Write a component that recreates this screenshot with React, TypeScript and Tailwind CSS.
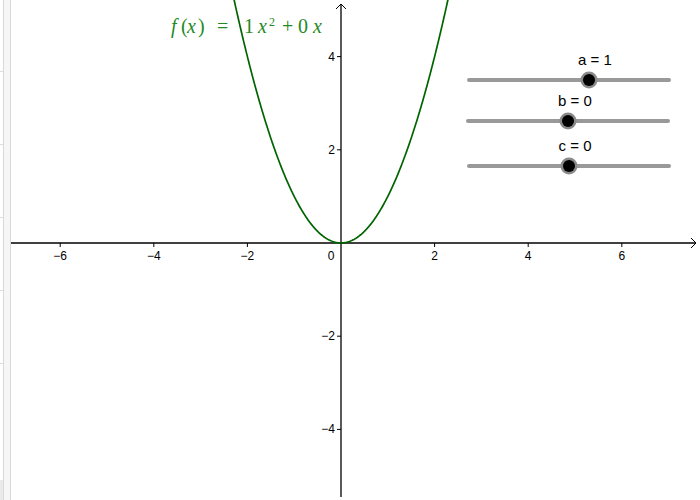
import React from "react";

const OX = 341;
const OY = 243;
const UX = 46.8;
const UY = 46.6;

const sx = (x: number) => OX + x * UX;
const sy = (y: number) => OY - y * UY;

function parabolaPath(a: number, b: number, c: number) {
  const pts: string[] = [];
  for (let i = 0; i <= 400; i++) {
    const x = -2.4 + (4.8 * i) / 400;
    const y = a * x * x + b * x + c;
    pts.push(`${i === 0 ? "M" : "L"}${sx(x).toFixed(2)},${sy(y).toFixed(2)}`);
  }
  return pts.join(" ");
}

const sliders = [
  { label: "a = 1", x1: 469, x2: 669, y: 80, knob: 589, lx: 595, ly: 65 },
  { label: "b = 0", x1: 468, x2: 668, y: 121, knob: 568, lx: 575, ly: 106 },
  { label: "c = 0", x1: 469, x2: 669, y: 166, knob: 569, lx: 575, ly: 151 },
];

const xTicks = [-6, -4, -2, 2, 4, 6];
const yTicks = [4, 2, -2, -4];
const sans = "'Liberation Sans', Arial, sans-serif";

function Graph() {
  return (
    <svg width={689} height={500} viewBox="0 0 689 500" className="block">
      <g transform="translate(-11,0)">
        {/* axes */}
        <line x1={11} y1={OY} x2={696} y2={OY} stroke="#000" strokeWidth={1.3} />
        <polyline points="691,238 696,243 691,248" fill="none" stroke="#000" strokeWidth={1} />
        <line x1={OX} y1={497} x2={OX} y2={4} stroke="#000" strokeWidth={1.3} />
        <polyline points="336,9 341,4 346,9" fill="none" stroke="#000" strokeWidth={1} />

        {xTicks.map((t) => (
          <g key={t}>
            <line x1={sx(t)} y1={OY} x2={sx(t)} y2={OY + 4} stroke="#000" strokeWidth={1} />
            <text x={sx(t)} y={OY + 17} textAnchor="middle" fontFamily={sans} fontSize={12} fill="#000">
              {t < 0 ? `\u2212${-t}` : t}
            </text>
          </g>
        ))}
        <text x={331} y={OY + 17} textAnchor="middle" fontFamily={sans} fontSize={12}>
          0
        </text>
        {yTicks.map((t) => (
          <g key={t}>
            <line x1={OX - 4} y1={sy(t)} x2={OX} y2={sy(t)} stroke="#000" strokeWidth={1} />
            <text x={OX - 6} y={sy(t) + 4} textAnchor="end" fontFamily={sans} fontSize={12}>
              {t < 0 ? `\u2212${-t}` : t}
            </text>
          </g>
        ))}

        {/* curve */}
        <path d={parabolaPath(1, 0, 0)} fill="none" stroke="#006400" strokeWidth={1.7} />

        {/* formula */}
        <text fontFamily="'Liberation Serif', 'Times New Roman', serif" fontSize={20} fill="#1f8a1f">
          <tspan x={171} y={33} fontStyle="italic">f</tspan>
          <tspan x={181} y={33}>(</tspan>
          <tspan x={187} y={33} fontStyle="italic">x</tspan>
          <tspan x={198} y={33}>)</tspan>
          <tspan x={217} y={33}>=</tspan>
          <tspan x={244} y={33}>1</tspan>
          <tspan x={258} y={33} fontStyle="italic">x</tspan>
          <tspan x={269} y={26} fontSize={12}>2</tspan>
          <tspan x={282} y={33}>+</tspan>
          <tspan x={298} y={33}>0</tspan>
          <tspan x={313} y={33} fontStyle="italic">x</tspan>
        </text>

        {/* sliders */}
        {sliders.map((s) => (
          <g key={s.label}>
            <text x={s.lx} y={s.ly} textAnchor="middle" fontFamily={sans} fontSize={15} fill="#000">
              {s.label}
            </text>
            <line x1={s.x1} y1={s.y} x2={s.x2} y2={s.y} stroke="#999" strokeWidth={4} strokeLinecap="round" />
            <circle cx={s.knob} cy={s.y} r={8.5} fill="#8a8a8a" />
            <circle cx={s.knob} cy={s.y} r={6} fill="#000" />
          </g>
        ))}
      </g>
    </svg>
  );
}

export default function App() {
  return (
    <div className="flex w-[700px] h-[500px] overflow-hidden bg-white">
      <div className="flex h-full">
        <div className="flex flex-col w-[3px] h-full">
          <div className="h-[72px] border-b border-[#dcdcdc]" />
          <div className="h-[73px] border-b border-[#dcdcdc]" />
          <div className="h-[73px] border-b border-[#dcdcdc]" />
          <div className="h-[73px] border-b border-[#dcdcdc]" />
          <div className="h-[73px] border-b border-[#dcdcdc]" />
          <div className="flex-1" />
          <div className="h-[20px] bg-[#e8ebe8]" />
        </div>
        <div className="w-[8px] h-full bg-[#f6f6f6] border-l border-r border-[#d9d9d9]" />
      </div>
      <Graph />
    </div>
  );
}
